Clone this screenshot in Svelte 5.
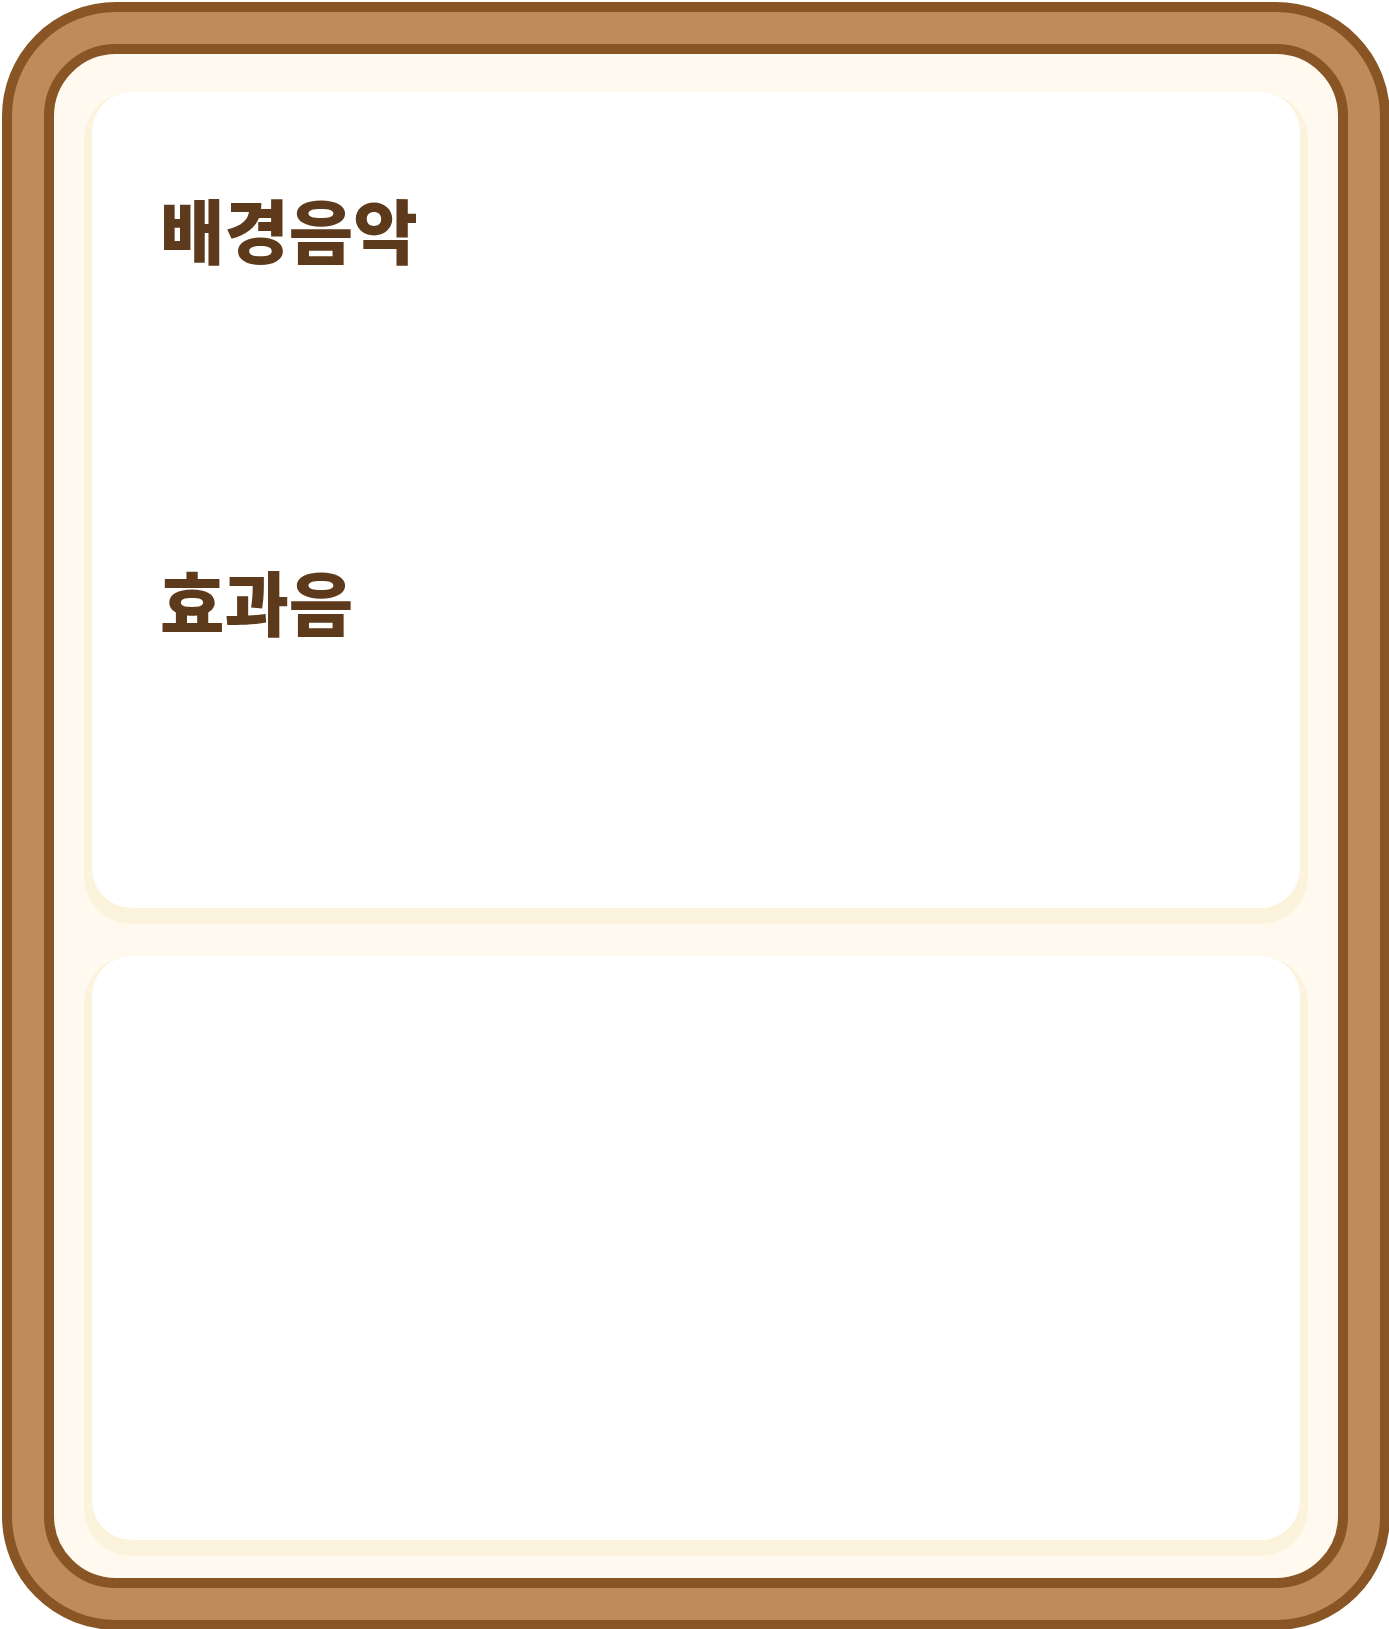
<script>
  const settings = ['배경음악', '효과음'];
</script>

<div class="page">
  <main class="frame">
    <div class="board">
      <section class="card sound">
        {#each settings as name}
          <div class="setting">
            <h2>{name}</h2>
          </div>
        {/each}
      </section>
      <section class="card extra"></section>
    </div>
  </main>
</div>

<style>
  :global(body) {
    margin: 0;
    background: #ffffff;
  }

  .page {
    box-sizing: border-box;
    min-height: 100vh;
    padding: 2px 0 0 2px;
    overflow: hidden;
    display: flex;
    font-family: 'Noto Sans CJK KR', sans-serif;
  }

  .frame {
    box-sizing: border-box;
    flex: 1;
    display: flex;
    margin: 0 -1px -1px 0;
    padding: 32px;
    border: 10px solid #895524;
    border-radius: 114px;
    background: #bf8b5b;
  }

  .board {
    box-sizing: border-box;
    flex: 1;
    display: flex;
    flex-direction: column;
    gap: 48px;
    padding: 38px;
    border: 10px solid #895524;
    border-radius: 72px;
    background: #fff9ef;
  }

  .card {
    box-sizing: border-box;
    border-radius: 40px;
    background: #ffffff;
    box-shadow: 0 8px 0 8px #fbf3db;
  }

  .sound {
    padding: 36px 68px;
  }

  .setting {
    box-sizing: border-box;
    min-height: 372px;
    padding-top: 51px;
  }

  .extra {
    flex: 1;
    min-height: 320px;
  }

  h2 {
    margin: 0;
    color: #5c3a1b;
    font-size: 70px;
    font-weight: 900;
    line-height: 100px;
  }
</style>
